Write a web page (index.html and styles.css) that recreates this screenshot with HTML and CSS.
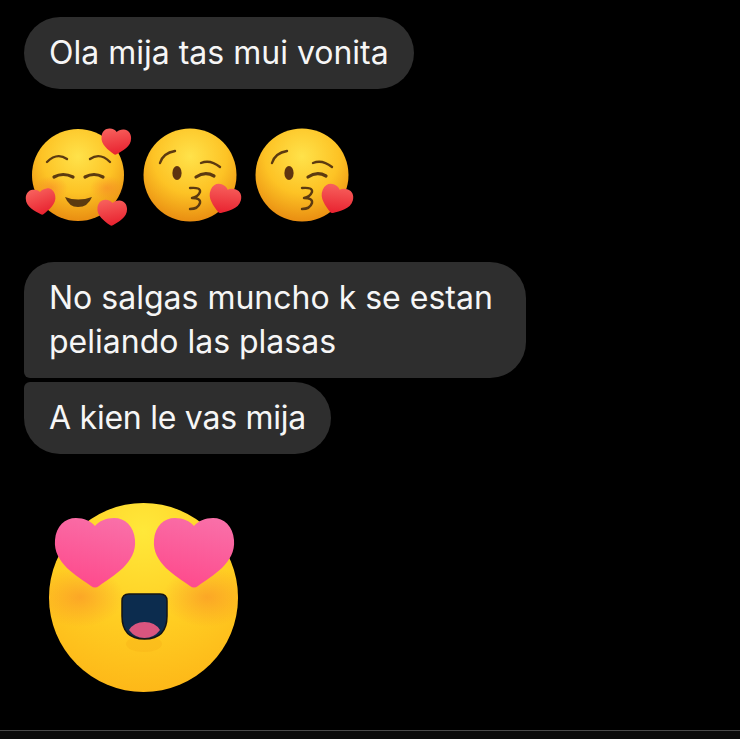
FILE: index.html
```html
<!DOCTYPE html>
<html lang="en">
<head>
  <meta charset="UTF-8" />
  <meta name="viewport" content="width=device-width, initial-scale=1" />
  <title>Chat</title>
  <link rel="stylesheet" href="styles.css">
</head>
<body>
  <main class="chat">
    <p class="bubble bubble-first">Ola mija tas mui vonita</p>

    <div class="emoji-row">
      <svg class="emoji" viewBox="-56 -56 112 112">
        <defs>
          <radialGradient id="face" cx="50%" cy="30%" r="72%">
            <stop offset="0" stop-color="#ffe24a" />
            <stop offset="0.55" stop-color="#fdc325" />
            <stop offset="1" stop-color="#e88a10" />
          </radialGradient>
          <radialGradient id="bigface" cx="50%" cy="15%" r="90%">
            <stop offset="0" stop-color="#ffe83a" />
            <stop offset="0.55" stop-color="#ffcd22" />
            <stop offset="1" stop-color="#fdb517" />
          </radialGradient>
          <radialGradient id="blush">
            <stop offset="0" stop-color="#f8802a" stop-opacity="0.5" />
            <stop offset="1" stop-color="#f8802a" stop-opacity="0" />
          </radialGradient>
          <linearGradient id="red" x1="0.3" y1="0" x2="0.6" y2="1">
            <stop offset="0" stop-color="#f7605c" />
            <stop offset="1" stop-color="#e8202e" />
          </linearGradient>
          <linearGradient id="pink" x1="0.7" y1="0" x2="0.4" y2="1">
            <stop offset="0" stop-color="#f96fa8" />
            <stop offset="1" stop-color="#fe4a8c" />
          </linearGradient>
          <clipPath id="bigclip">
            <circle cx="99.500" cy="99.500" r="94.500" />
          </clipPath>
          <path id="heart" d="M-4 33C-18 23-42 10-40-13C-39-27-30-35-19-35C-11-35-4-32 0-27C4-32 11-35 19-35C30-35 39-27 40-13C42 10 18 23 4 33Q0 36-4 33Z" />
          <g id="kiss">
            <circle r="46.500" fill="url(#face)" />
            <path class="line" d="M-30-12Q-27-22-15-24" />
            <ellipse cx="-13" cy="-2" rx="4.600" ry="7" fill="#5e3410" />
            <path class="line" d="M11-12Q20-16 30-8" />
            <path class="line thick" d="M6 2Q15-4 24 1" />
            <path class="line" d="M0 13Q11 12 10 17Q8 22 2 23Q11 23 10 28Q8 34 0 34" />
            <use href="#heart" fill="url(#red)" transform="translate(34 25) rotate(20) scale(.4)" />
          </g>
        </defs>
        <circle r="46" fill="url(#face)" />
        <ellipse cx="-27" cy="13" rx="17" ry="12" fill="url(#blush)" />
        <ellipse cx="29" cy="13" rx="17" ry="12" fill="url(#blush)" />
        <path class="line" d="M-31-13Q-21-23-11-16" />
        <path class="line" d="M12-16Q22-23 32-13" />
        <path class="line thick" d="M-24 2Q-15-3-5 2" />
        <path class="line thick" d="M7 2Q16-3 25 2" />
        <path class="smile" d="M-13 22Q0 27 14 22Q10 32 0 32Q-9 32-13 22Z" />
        <use href="#heart" fill="url(#red)" transform="translate(38 -33) rotate(4) scale(.37)" />
        <use href="#heart" fill="url(#red)" transform="translate(-37 27) rotate(-6) scale(.37)" />
        <use href="#heart" fill="url(#red)" transform="translate(34 38) rotate(3) scale(.37)" />
      </svg>
      <svg class="emoji" viewBox="-56 -56 112 112"><use href="#kiss" /></svg>
      <svg class="emoji" viewBox="-56 -56 112 112"><use href="#kiss" /></svg>
    </div>

    <div class="group">
      <p class="bubble bubble-top">No salgas muncho k se estan<br>peliando las plasas</p>
      <p class="bubble bubble-bottom">A kien le vas mija</p>
    </div>

    <svg class="sticker" viewBox="0 0 200 200">
      <circle cx="99.500" cy="99.500" r="94.500" fill="url(#bigface)" />
      <g clip-path="url(#bigclip)">
        <ellipse cx="36" cy="99" rx="44" ry="30" fill="url(#blush)" />
        <ellipse cx="163" cy="99" rx="44" ry="30" fill="url(#blush)" />
      </g>
      <ellipse cx="100" cy="146" rx="18" ry="8" fill="#f5ae16" opacity=".35" />
      <use href="#heart" fill="url(#pink)" transform="translate(51 55)" />
      <use href="#heart" fill="url(#pink)" transform="translate(150 55)" />
      <path d="M85 96H116Q123 96 123 103V118Q123 141 100.500 141Q78 141 78 118V103Q78 96 85 96Z" fill="#0c2c4e" stroke="#141414" stroke-width="1.500" />
      <path d="M85 132Q90 124 100.500 124Q111 124 116 132Q110 140 100.500 140Q91 140 85 132Z" fill="#d9557f" />
    </svg>
  </main>
  <footer class="bar"></footer>
</body>
</html>
```

FILE: styles.css
```css
html, body {
  height: 100%;
}
body {
  margin: 0;
  background: #000;
  color: #f6f6f6;
  font-family: Inter, 'Liberation Sans', sans-serif;
  overflow: hidden;
  display: flex;
  flex-direction: column;
}
.chat {
  flex: 1;
  padding: 17px 0 0 24px;
}
.bubble {
  width: fit-content;
  margin: 0;
  padding: 14px 25px;
  background: #2e2e2e;
  border-radius: 36px;
  font-size: 32px;
  line-height: 44px;
}
.emoji-row {
  display: flex;
  margin: 30px 0 31px -2px;
}
.emoji {
  width: 112px;
  height: 112px;
  filter: blur(0.4px);
}
.line {
  fill: none;
  stroke: #5c3a10;
  stroke-width: 2.4;
  stroke-linecap: round;
  stroke-linejoin: round;
}
.thick {
  stroke-width: 3.2;
}
.smile {
  fill: #5c3a10;
}
.group {
  display: flex;
  flex-direction: column;
  gap: 4px;
}
.bubble-top {
  padding-right: 33px;
  border-radius: 30px 36px 36px 6px;
}
.bubble-bottom {
  letter-spacing: -0.25px;
  border-radius: 6px 36px 36px 36px;
}
.sticker {
  display: block;
  width: 200px;
  height: 200px;
  margin: 44px 0 0 20px;
  filter: blur(0.4px);
}
.bar {
  height: 8px;
  border-top: 1px solid #4a4a4a;
  background: #0b0b0b;
}
```
